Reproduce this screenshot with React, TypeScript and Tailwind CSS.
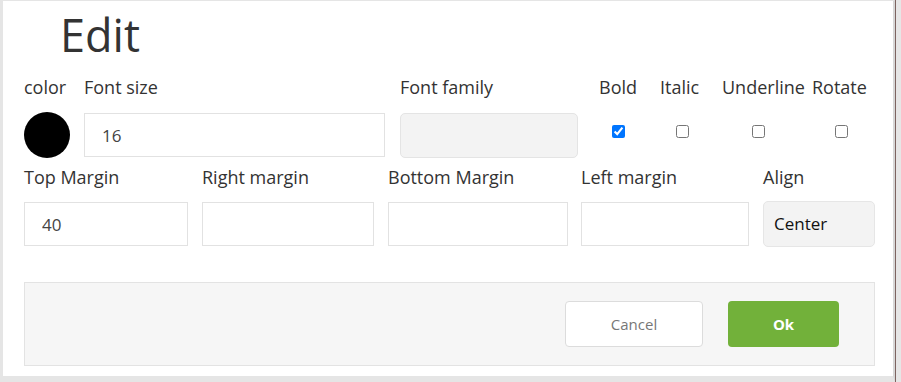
import React from "react";

const font = { fontFamily: '"Open Sans", "Noto Sans", sans-serif' };

function Label({ children, className = "" }: { children: React.ReactNode; className?: string }) {
  return (
    <div className={`h-[24px] leading-[24px] text-[18px] text-[#333] whitespace-nowrap ${className}`}>
      {children}
    </div>
  );
}

function TextBox({ value, className = "" }: { value?: string; className?: string }) {
  return (
    <input
      readOnly
      defaultValue={value}
      className={`h-[44px] border border-[#e2e2e2] bg-white px-[17px] text-[17px] text-[#444] outline-none ${className}`}
    />
  );
}

function CheckCol({ label, width, checked }: { label: string; width: string; checked?: boolean }) {
  return (
    <div className={`flex flex-col ${width}`}>
      <Label>{label}</Label>
      <div className="flex justify-center pt-[26px]">
        <input type="checkbox" defaultChecked={checked} className="m-0 h-[13px] w-[13px]" />
      </div>
    </div>
  );
}

export default function App() {
  return (
    <div className="flex w-[901px] h-[382px] bg-[#e6e6e6]" style={font}>
      <div className="flex flex-col w-[895px] h-full bg-white border-l-[3px] border-t border-b-[6px] border-r-[2px] border-[#e5e5e5] border-r-[#d8d8d8]">
        <div className="h-[67px] leading-[67px] pl-[57px] text-[45px] text-[#333]">Edit</div>

        <div className="flex mt-[7px] pl-[21px]">
          <div className="flex flex-col w-[46px]">
            <Label>color</Label>
            <div className="mt-[13px] h-[46px] w-[46px] rounded-full bg-black" />
          </div>
          <div className="flex flex-col ml-[14px] w-[301px]">
            <Label>Font size</Label>
            <TextBox value="16" className="mt-[14px] w-[301px]" />
          </div>
          <div className="flex flex-col ml-[15px] w-[178px]">
            <Label>Font family</Label>
            <div className="mt-[14px] h-[45px] w-[178px] rounded-[5px] border border-[#e4e4e4] bg-[#f3f3f3]" />
          </div>
          <div className="flex ml-[21px]">
            <CheckCol label="Bold" width="w-[38px]" checked />
            <div className="w-[23px]" />
            <CheckCol label="Italic" width="w-[45px]" />
            <div className="w-[17px]" />
            <CheckCol label="Underline" width="w-[72px]" />
            <div className="w-[18px]" />
            <CheckCol label="Rotate" width="w-[58px]" />
          </div>
        </div>

        <div className="flex mt-[7px] pl-[21px]">
          <div className="flex flex-col w-[164px]">
            <Label>Top Margin</Label>
            <TextBox value="40" className="mt-[13px] w-[164px]" />
          </div>
          <div className="flex flex-col ml-[14px] w-[172px]">
            <Label>Right margin</Label>
            <TextBox className="mt-[13px] w-[172px]" />
          </div>
          <div className="flex flex-col ml-[14px] w-[180px]">
            <Label>Bottom Margin</Label>
            <TextBox className="mt-[13px] w-[180px]" />
          </div>
          <div className="flex flex-col ml-[13px] w-[168px]">
            <Label>Left margin</Label>
            <TextBox className="mt-[13px] w-[168px]" />
          </div>
          <div className="flex flex-col ml-[14px] w-[112px]">
            <Label>Align</Label>
            <div className="mt-[12px] h-[46px] w-[112px] rounded-[5px] border border-[#e6e6e6] bg-[#f3f3f3] pl-[10px] leading-[44px] text-[17px] text-[#111]">
              Center
            </div>
          </div>
        </div>

        <div className="ml-[21px] mt-[35px] flex h-[84px] w-[851px] justify-end gap-[25px] border border-[#e3e3e3] bg-[#f6f6f6] pt-[18px] pr-[35px]">
          <button className="h-[46px] w-[138px] rounded-[4px] border border-[#dcdcdc] bg-white text-[15px] text-[#777]">
            Cancel
          </button>
          <button className="h-[46px] w-[111px] rounded-[4px] bg-[#72b13a] text-[15px] font-bold text-white">
            Ok
          </button>
        </div>
      </div>
      <div className="w-px h-full bg-[#7d6460]" />
    </div>
  );
}
